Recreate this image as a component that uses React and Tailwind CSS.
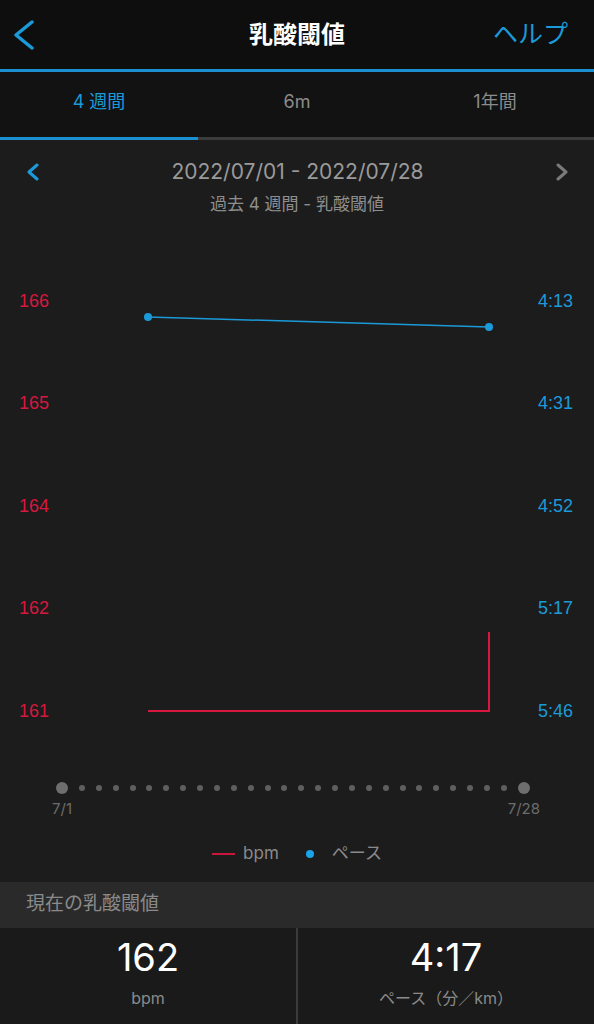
import React from "react";

const BLUE = "#1b9ad9";

function Chevron({ dir = "left", color, w = 12, h = 18, sw = 3 }) {
  const d = dir === "left" ? `M${w - 2} 2 L2 ${h / 2} L${w - 2} ${h - 2}` : `M2 2 L${w - 2} ${h / 2} L2 ${h - 2}`;
  return (
    <svg width={w} height={h} viewBox={`0 0 ${w} ${h}`}>
      <path d={d} fill="none" stroke={color} strokeWidth={sw} strokeLinecap="round" strokeLinejoin="round" />
    </svg>
  );
}

export default function App() {
  const left = ["166", "165", "164", "162", "161"];
  const right = ["4:13", "4:31", "4:52", "5:17", "5:46"];
  const smallDots = Array.from({ length: 26 });
  return (
    <div className="w-[594px] h-[1024px] overflow-hidden bg-[#1c1c1c] flex flex-col" style={{ fontFamily: 'Inter, "Noto Sans CJK JP", sans-serif' }}>
      {/* Header */}
      <div className="h-[69px] bg-[#0e0e0e] flex items-center justify-between px-[14px] relative">
        <Chevron dir="left" color={BLUE} w={20} h={30} sw={3.5} />
        <div className="absolute left-0 right-0 text-center text-white text-[24px] font-bold pointer-events-none">乳酸閾値</div>
        <div className="text-[25px] text-[#1b9ad9] pr-[12px]">ヘルプ</div>
      </div>
      <div className="h-[3px] bg-[#1b8fd0]" />
      {/* Tabs */}
      <div className="h-[65px] pb-[6px] bg-[#121212] grid grid-cols-3 items-center text-[18px]">
        <div className="text-center text-[#1b9ad9]">4 週間</div>
        <div className="text-center text-[#8c8c8c]">6m</div>
        <div className="text-center text-[#8c8c8c]">1年間</div>
      </div>
      <div className="h-[3px] flex bg-[#3c3c3c]">
        <div className="w-[198px] bg-[#1b8fd0]" />
      </div>
      {/* Date row */}
      <div className="pt-[20px] flex items-center justify-between h-[44px] pl-[27px] pr-[26px]">
        <Chevron dir="left" color={BLUE} w={12} h={18} sw={3} />
        <div className="text-[21px] text-[#9a9a9a] leading-[24px]">2022/07/01 - 2022/07/28</div>
        <Chevron dir="right" color="#7a7a7a" w={12} h={18} sw={3} />
      </div>
      <div className="mt-[9px] text-center text-[17px] leading-[22px] text-[#8e8e8e]">過去 4 週間 - 乳酸閾値</div>
      {/* Chart */}
      <div className="mt-[35px] flex h-[512.5px]">
        <div className="w-[110px] flex flex-col pl-[19px]">
          {left.map((l) => (
            <div key={l} className="h-[102.5px] flex items-center text-[18px] text-[#d8173f]" style={{ fontFamily: '"Liberation Sans", sans-serif' }}>{l}</div>
          ))}
        </div>
        <svg width="420" height="512.5" viewBox="0 0 420 512.5" className="shrink-0">
          <line x1="38" y1="67" x2="379" y2="77" stroke={BLUE} strokeWidth="1.5" />
          <circle cx="38" cy="67" r="4" fill={BLUE} />
          <circle cx="379" cy="77" r="4" fill={BLUE} />
          <polyline points="38,461 379,461 379,382" fill="none" stroke="#d8173f" strokeWidth="2" />
        </svg>
        <div className="flex-1 flex flex-col items-end pr-[21px]">
          {right.map((r) => (
            <div key={r} className="h-[102.5px] flex items-center text-[18px] text-[#1b9ad9]" style={{ fontFamily: '"Liberation Sans", sans-serif' }}>{r}</div>
          ))}
        </div>
      </div>
      {/* Dots row */}
      <div className="mt-[19px] pl-[56px] pr-[64px] flex items-center justify-between h-[12px]">
        <div className="w-[12px] h-[12px] rounded-full bg-[#6e6e6e]" />
        {smallDots.map((_, i) => (
          <div key={i} className="w-[6px] h-[6px] rounded-full bg-[#5f5f5f]" />
        ))}
        <div className="w-[12px] h-[12px] rounded-full bg-[#6e6e6e]" />
      </div>
      <div className="mt-[5px] flex justify-between pl-[52px] pr-[54px] text-[15px] text-[#6c6c6c] leading-[20px]">
        <span>7/1</span>
        <span>7/28</span>
      </div>
      {/* Legend */}
      <div className="mt-[22px] flex items-center justify-center h-[26px] text-[17px] text-[#8a8a8a]">
        <div className="w-[23px] h-[2px] bg-[#c8173d] mr-[8px]" />
        <span>bpm</span>
        <div className="w-[8px] h-[8px] rounded-full bg-[#1ba3e8] ml-[27px] mr-[18px]" />
        <span>ペース</span>
      </div>
      {/* Current section */}
      <div className="mt-[15px] h-[46px] bg-[#2a2a2a] flex items-center pl-[26px] text-[19px] text-[#8a8a8a]">現在の乳酸閾値</div>
      <div className="flex-1 grid grid-cols-[296px_2px_1fr] bg-[#1a1a1a]">
        <div className="flex flex-col items-center pt-[7px]">
          <div className="text-[38px] text-white leading-[44px]">162</div>
          <div className="mt-[7px] text-[16px] text-[#8a8a8a]">bpm</div>
        </div>
        <div className="bg-[#3a3a3a]" />
        <div className="flex flex-col items-center pt-[7px]">
          <div className="text-[38px] text-white leading-[44px]">4:17</div>
          <div className="mt-[7px] text-[16px] text-[#8a8a8a]">ペース（分／km）</div>
        </div>
      </div>
    </div>
  );
}
